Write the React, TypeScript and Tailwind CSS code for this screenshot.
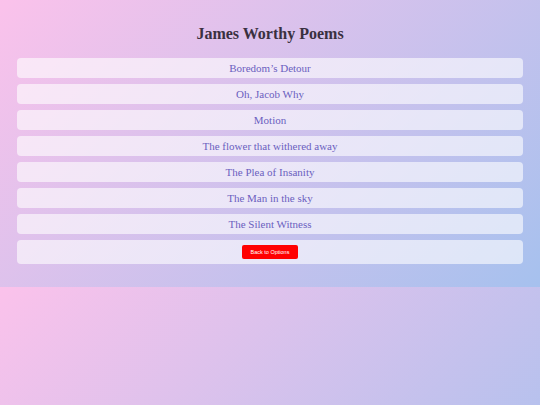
const poems = [
  "Boredom’s Detour",
  "Oh, Jacob Why",
  "Motion",
  "The flower that withered away",
  "The Plea of Insanity",
  "The Man in the sky",
  "The Silent Witness",
];

export default function App() {
  return (
    <div className="min-h-screen bg-[linear-gradient(135deg,#fbc2eb,#a6c1ee)] bg-[length:100%_287px] bg-repeat font-['Liberation_Serif',serif]">
      <div className="px-[17px] pt-[24px] pb-[23px]">
        <h1 className="text-center text-[16px] font-bold leading-[20px] text-[#3a3040] mb-[14px]">
          James Worthy Poems
        </h1>
        <ul className="flex flex-col gap-[6px]">
          {poems.map((p) => (
            <li
              key={p}
              className="h-[20px] flex items-center justify-center rounded-[4px] bg-white/60 text-[11px] text-[#6b5fbf]"
            >
              {p}
            </li>
          ))}
          <li className="h-[24px] flex items-center justify-center rounded-[4px] bg-white/60">
            <button className="h-[14px] w-[56px] rounded-[2px] bg-[#ff0000] text-white text-[5.5px] font-['Liberation_Sans',sans-serif]">
              Back to Options
            </button>
          </li>
        </ul>
      </div>
    </div>
  );
}
